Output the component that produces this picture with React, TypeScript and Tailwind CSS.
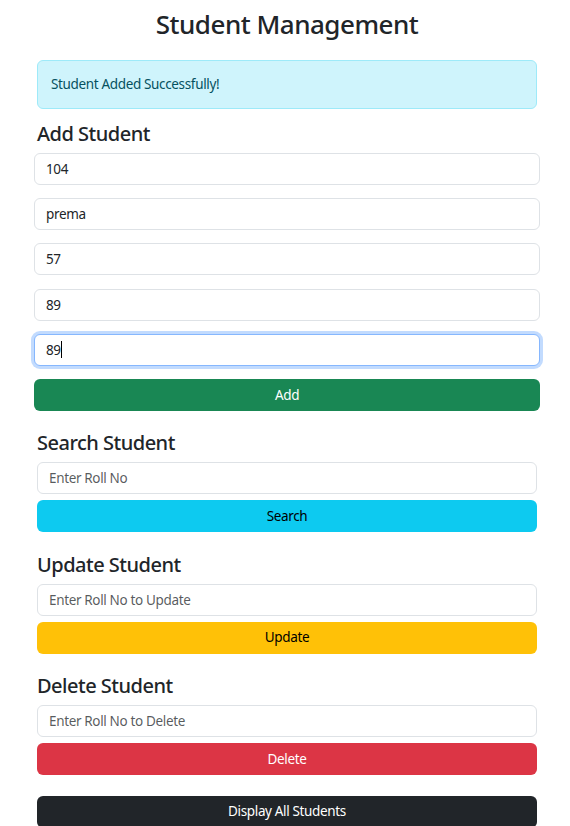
import React from "react";

const small = "text-[13.5px] tracking-[-0.35px]";

function Field({ value, placeholder }: { value?: string; placeholder?: string }) {
  return (
    <input
      readOnly
      value={value ?? ""}
      placeholder={placeholder}
      className={
        "block h-[32px] w-full rounded-[6px] border border-[#dee2e6] bg-white px-[11px] text-[#212529] outline-none placeholder:text-[rgba(33,37,41,0.75)] " +
        small
      }
    />
  );
}

function Section({ title, placeholder, label, btn }: { title: string; placeholder: string; label: string; btn: string }) {
  return (
    <div className="ml-[37px] mt-[20.3px] w-[500px]">
      <h3 className="text-[20px] font-medium leading-[24px] tracking-[-0.5px] text-[#212529]">{title}</h3>
      <div className="mt-[7px]">
        <Field placeholder={placeholder} />
      </div>
      <button className={"mt-[6px] flex h-[32px] w-full items-center justify-center rounded-[6px] " + small + " " + btn}>
        {label}
      </button>
    </div>
  );
}

export default function App() {
  return (
    <div className="min-h-[826px] w-[570px] bg-white pt-[9.3px] font-['Noto_Sans',sans-serif] text-[#212529]">
      <h2 className="w-[574px] text-center text-[26px] font-medium leading-[31.2px] tracking-[-0.5px]">Student Management</h2>
      <div
        className={
          "ml-[37px] mt-[19.8px] flex h-[48.4px] w-[500px] items-center rounded-[6px] border border-[#9eeaf9] bg-[#cff4fc] px-[13px] text-[#055160] " +
          small
        }
      >
        Student Added Successfully!
      </div>

      <h3 className="ml-[37px] mt-[13.3px] text-[20px] font-medium leading-[24px] tracking-[-0.5px]">Add Student</h3>
      <div className="ml-[34px] mt-[7px] flex w-[506px] flex-col gap-[13.2px]">
        <Field value="104" />
        <Field value="prema" />
        <Field value="57" />
        <Field value="89" />
        <div className="relative">
          <input
            readOnly
            value="89"
            className={
              "block h-[32px] w-full rounded-[6px] border border-[#86b7fe] bg-white px-[11px] text-[#212529] shadow-[0_0_0_3px_rgba(13,110,253,0.25)] outline-none " +
              small
            }
          />
          <div className={"pointer-events-none absolute inset-0 flex items-center px-[12px] " + small}>
            <span className="invisible">89</span>
            <span className="ml-[0.5px] h-[17px] w-px bg-black" />
          </div>
        </div>
        <button
          className={
            "flex h-[32px] w-full items-center justify-center rounded-[6px] bg-[#198754] text-white " + small
          }
        >
          Add
        </button>
      </div>

      <Section title="Search Student" placeholder="Enter Roll No" label="Search" btn="bg-[#0dcaf0] text-black" />
      <Section title="Update Student" placeholder="Enter Roll No to Update" label="Update" btn="bg-[#ffc107] text-black" />
      <Section title="Delete Student" placeholder="Enter Roll No to Delete" label="Delete" btn="bg-[#dc3545] text-white" />

      <div className="ml-[37px] mt-[20.7px] w-[500px]">
        <button
          className={
            "flex h-[32px] w-full items-center justify-center rounded-[6px] bg-[#212529] text-white " + small
          }
        >
          Display All Students
        </button>
      </div>
    </div>
  );
}
